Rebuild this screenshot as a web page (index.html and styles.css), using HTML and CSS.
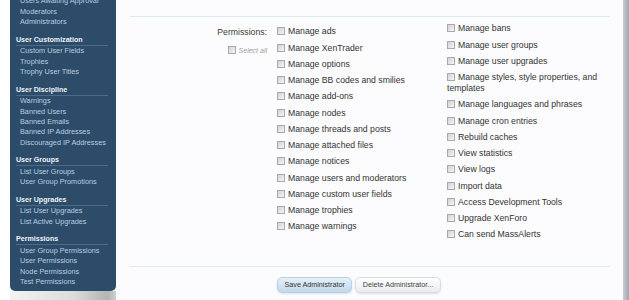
FILE: index.html
```html
<!DOCTYPE html>
<html>
<head>
  <meta charset="UTF-8">
  <title>Edit Administrator</title>
  <link rel="stylesheet" href="styles.css">
</head>
<body>
  <div class="page">
    <div class="side-col">
      <nav class="sidebar">
        <div class="nav-section first">
          <ul>
            <li>Users Awaiting Approval</li>
            <li>Moderators</li>
            <li>Administrators</li>
          </ul>
        </div>
        <div class="nav-section">
          <h3>User Customization</h3>
          <ul>
            <li>Custom User Fields</li>
            <li>Trophies</li>
            <li>Trophy User Titles</li>
          </ul>
        </div>
        <div class="nav-section">
          <h3>User Discipline</h3>
          <ul>
            <li>Warnings</li>
            <li>Banned Users</li>
            <li>Banned Emails</li>
            <li>Banned IP Addresses</li>
            <li>Discouraged IP Addresses</li>
          </ul>
        </div>
        <div class="nav-section">
          <h3>User Groups</h3>
          <ul>
            <li>List User Groups</li>
            <li>User Group Promotions</li>
          </ul>
        </div>
        <div class="nav-section">
          <h3>User Upgrades</h3>
          <ul>
            <li>List User Upgrades</li>
            <li>List Active Upgrades</li>
          </ul>
        </div>
        <div class="nav-section">
          <h3>Permissions</h3>
          <ul>
            <li>User Group Permissions</li>
            <li>User Permissions</li>
            <li>Node Permissions</li>
            <li>Test Permissions</li>
          </ul>
        </div>
      </nav>
      <div class="side-foot"></div>
    </div>

    <div class="main">
      <form class="form-block">
        <div class="perm-row">
          <div class="perm-label">
            <div class="title">Permissions:</div>
            <label class="select-all"><input type="checkbox" class="cb">Select all</label>
          </div>

          <ul class="perm-list left">
            <li><label><input type="checkbox" class="cb">Manage ads</label></li>
            <li><label><input type="checkbox" class="cb">Manage XenTrader</label></li>
            <li><label><input type="checkbox" class="cb">Manage options</label></li>
            <li><label><input type="checkbox" class="cb">Manage BB codes and smilies</label></li>
            <li><label><input type="checkbox" class="cb">Manage add-ons</label></li>
            <li><label><input type="checkbox" class="cb">Manage nodes</label></li>
            <li><label><input type="checkbox" class="cb">Manage threads and posts</label></li>
            <li><label><input type="checkbox" class="cb">Manage attached files</label></li>
            <li><label><input type="checkbox" class="cb">Manage notices</label></li>
            <li><label><input type="checkbox" class="cb">Manage users and moderators</label></li>
            <li><label><input type="checkbox" class="cb">Manage custom user fields</label></li>
            <li><label><input type="checkbox" class="cb">Manage trophies</label></li>
            <li><label><input type="checkbox" class="cb">Manage warnings</label></li>
          </ul>

          <ul class="perm-list right">
            <li><label><input type="checkbox" class="cb">Manage bans</label></li>
            <li><label><input type="checkbox" class="cb">Manage user groups</label></li>
            <li><label><input type="checkbox" class="cb">Manage user upgrades</label></li>
            <li><label><input type="checkbox" class="cb">Manage styles, style properties, and templates</label></li>
            <li><label><input type="checkbox" class="cb">Manage languages and phrases</label></li>
            <li><label><input type="checkbox" class="cb">Manage cron entries</label></li>
            <li><label><input type="checkbox" class="cb">Rebuild caches</label></li>
            <li><label><input type="checkbox" class="cb">View statistics</label></li>
            <li><label><input type="checkbox" class="cb">View logs</label></li>
            <li><label><input type="checkbox" class="cb">Import data</label></li>
            <li><label><input type="checkbox" class="cb">Access Development Tools</label></li>
            <li><label><input type="checkbox" class="cb">Upgrade XenForo</label></li>
            <li><label><input type="checkbox" class="cb">Can send MassAlerts</label></li>
          </ul>
        </div>
      </form>

      <div class="actions">
        <button type="button" class="btn primary">Save Administrator</button>
        <button type="button" class="btn">Delete Administrator...</button>
      </div>
    </div>

    <div class="scroll"></div>
  </div>
</body>
</html>
```

FILE: styles.css
```css
* {
  box-sizing: border-box;
}
body {
  margin: 0;
  width: 629px;
  height: 300px;
  overflow: hidden;
  background: #fff;
  font-family: "Liberation Sans", Arial, sans-serif;
}
.page {
  display: flex;
  height: 300px;
}

/* sidebar */
.side-col {
  width: 106px;
  margin-left: 10px;
  display: flex;
  flex-direction: column;
}
.sidebar {
  height: 291px;
  background: #2c4c69;
  padding: 0 8px 0 6px;
  border-radius: 0 0 5px 5px;
  overflow: hidden;
}
.side-foot {
  flex: 1;
  background: linear-gradient(to right, #f3f3f3, #dcdcdc 60%, #b4b4b4 92%, #cfcfcf);
}
.nav-section {
  margin-bottom: 8.2px;
}
.nav-section:last-child {
  margin-bottom: 0;
}
.nav-section h3 {
  margin: 0;
  font-size: 7.1px;
  line-height: 9px;
  font-weight: bold;
  color: #eef3f7;
  border-bottom: 1px solid #4a6b8b;
  white-space: nowrap;
}
.nav-section ul {
  list-style: none;
  margin: 0;
  padding: 0.5px 0 0 4px;
}
.nav-section.first ul {
  margin-top: -3.7px;
  padding-top: 0;
}
.nav-section li {
  font-size: 7.3px;
  line-height: 10.4px;
  color: #b9cde0;
  white-space: nowrap;
}

/* main content */
.main {
  flex: 1;
  background: #fcfcfe;
  padding: 16px 13px 0 14px;
}
.form-block {
  margin: 0;
  border-top: 1px solid #dcedef;
  border-bottom: 1px solid #dcedef;
}
.perm-row {
  display: flex;
  align-items: flex-start;
  padding-bottom: 22.9px;
  font-size: 8.7px;
  color: #333;
}
.perm-label {
  width: 137px;
  margin-right: 10px;
  padding-top: 9.5px;
  text-align: right;
}
.perm-label .title {
  line-height: 11px;
  color: #3a3a3a;
}
.select-all {
  display: block;
  margin-top: 7px;
  font-size: 7px;
  line-height: 11px;
  font-style: italic;
  color: #a0a0a0;
}
.perm-list {
  list-style: none;
  margin: 0;
  padding: 6.9px 0 0 0;
}
.perm-list.left {
  width: 170px;
}
.perm-list.right {
  width: 163px;
  padding-top: 3.9px;
}
.perm-list li {
  line-height: 11px;
  padding: 2.6px 0 2.65px;
}
.cb {
  -webkit-appearance: none;
  appearance: none;
  width: 8px;
  height: 8px;
  margin: 0 3px 0 0;
  border: 1px solid #a9a9a9;
  background: linear-gradient(135deg, #d2d2d2, #f5f5f5);
  vertical-align: -1px;
}
.select-all .cb {
  margin-right: 3px;
}

/* buttons */
.actions {
  display: flex;
  gap: 3px;
  padding: 10px 0 0 147px;
}
.btn {
  height: 16px;
  padding: 0 6.5px;
  font-family: "Liberation Sans", Arial, sans-serif;
  font-size: 7.2px;
  color: #444;
  border: 1px solid #d8dee3;
  border-radius: 5px;
  background: linear-gradient(#ffffff, #e9edf0);
  box-shadow: 0 1px 2px rgba(0,0,0,0.12);
}
.btn.primary {
  color: #333;
  border-color: #b9d0e4;
  background: linear-gradient(#e6f0f9, #c2d8ec);
}

.scroll {
  width: 6px;
  background: linear-gradient(to right, #c9cdd2, #a0a6ad);
}
```
